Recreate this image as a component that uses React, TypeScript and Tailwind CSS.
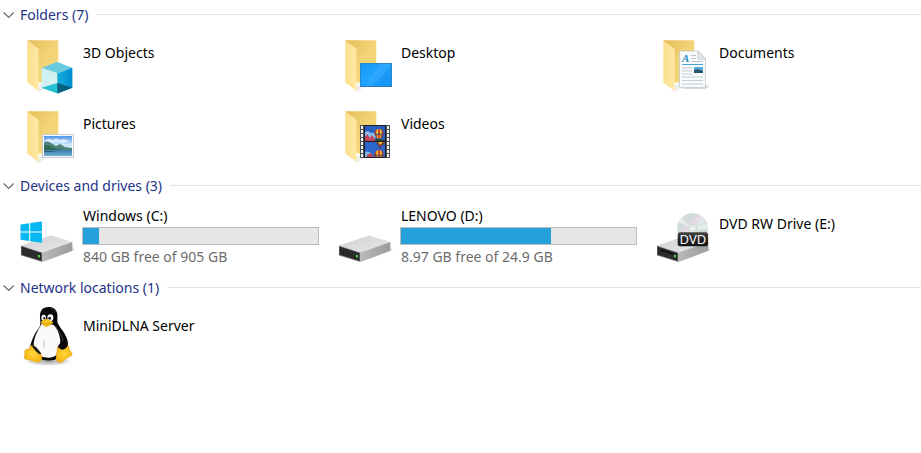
import { useState } from "react";
import type { ReactNode } from "react";

type Item = {
  name: string;
  icon: ReactNode;
  detail?: string;
  used?: number;
};

type Group = {
  title: string;
  items: Item[];
};

function Icon({ children }: { children: ReactNode }) {
  return (
    <svg viewBox="0 0 62 71" className="h-[71px] w-[62px] shrink-0" aria-hidden="true">
      {children}
    </svg>
  );
}

function FolderIcon({ children }: { children: ReactNode }) {
  return (
    <Icon>
      <defs>
        <linearGradient id="folder-back" x1="0" y1="0" x2="1" y2="1">
          <stop offset="0" stopColor="#e6bd58" />
          <stop offset="0.5" stopColor="#f2d377" />
          <stop offset="1" stopColor="#f7da7c" />
        </linearGradient>
        <linearGradient id="folder-flap" x1="0" y1="0" x2="1" y2="0">
          <stop offset="0" stopColor="#fbdf8e" />
          <stop offset="1" stopColor="#ffe9a6" />
        </linearGradient>
      </defs>
      <path d="M15 60 L19 63 L26 58 L22 54 Z" fill="#eeeeee" />
      <path d="M7.5 11.3 H38.3 V53.5 H18 Z" fill="url(#folder-back)" />
      <path d="M7.3 11.3 L18.5 20 V62 L7.3 53.5 Z" fill="url(#folder-flap)" />
      {children}
    </Icon>
  );
}

function ObjectsIcon() {
  return (
    <FolderIcon>
      <defs>
        <linearGradient id="cube-right" x1="0" y1="0" x2="1" y2="0">
          <stop offset="0" stopColor="#12b0dc" />
          <stop offset="1" stopColor="#0289d2" />
        </linearGradient>
        <linearGradient id="cube-left" x1="0" y1="0" x2="1" y2="1">
          <stop offset="0" stopColor="#c9f1f5" />
          <stop offset="1" stopColor="#d9f0f1" />
        </linearGradient>
      </defs>
      <path d="M37.3 33 L52.4 38.7 L37.3 44.3 L21.6 38.7 Z" fill="#68cbdf" />
      <path d="M21.6 38.7 L37.3 44.3 V64.5 L21.6 58.8 Z" fill="url(#cube-left)" />
      <path d="M52.4 38.7 L37.3 44.3 V64.5 L52.4 58.8 Z" fill="url(#cube-right)" />
      <path d="M21.6 58.8 L37.3 54 V64.5 Z" fill="#23bfd3" />
      <path d="M52.4 58.8 L37.3 54 V64.5 Z" fill="#065f7c" />
    </FolderIcon>
  );
}

function DesktopIcon() {
  return (
    <FolderIcon>
      <defs>
        <linearGradient id="screen" x1="0" y1="0" x2="1" y2="1">
          <stop offset="0" stopColor="#1496f5" />
          <stop offset="0.5" stopColor="#22a4ff" />
          <stop offset="0.51" stopColor="#1a9cfb" />
          <stop offset="1" stopColor="#1494f4" />
        </linearGradient>
      </defs>
      <rect x="22" y="34" width="32" height="24" fill="#2b86cc" />
      <rect x="23" y="35" width="30" height="22" fill="url(#screen)" />
      <path d="M27 57 L42 35 H53 V37 L35 57 Z" fill="#3fb0ff" opacity="0.45" />
      <rect x="22" y="57" width="32" height="1" fill="#2b7db8" />
    </FolderIcon>
  );
}

function DocumentsIcon() {
  return (
    <FolderIcon>
      <path d="M48 56 L54 57 L49 60 H24 Z" fill="#d9d9d9" />
      <path d="M23.5 22 H42 L49.5 30 V58.5 H23.5 Z" fill="#f8fafc" stroke="#c3c8cc" strokeWidth="0.8" />
      <path d="M42 22 V30 H49.5 Z" fill="#e6e9ec" stroke="#bcc1c5" strokeWidth="0.8" />
      <text x="26" y="33" fontSize="11" fontStyle="italic" fontWeight="bold" fill="#2a8cc4" fontFamily="Liberation Serif, serif">
        A
      </text>
      <path d="M35 26.5 H40 M35 29.5 H40 M35 32.5 H47" stroke="#b9c0c6" strokeWidth="0.9" />
      <path d="M26 35.5 H47" stroke="#4ba3cf" strokeWidth="1" />
      <path d="M26 39 H36 M26 42 H36 M26 45 H36 M26 48 H47 M26 51.5 H47 M26 55 H47" stroke="#c1c6cb" strokeWidth="0.9" />
      <rect x="38" y="38" width="9" height="6" fill="#57aee2" />
      <path d="M38 41 Q42 39 47 42 V44 H38 Z" fill="#24566d" />
    </FolderIcon>
  );
}

function PicturesIcon() {
  return (
    <FolderIcon>
      <defs>
        <linearGradient id="sky" x1="0" y1="0" x2="0" y2="1">
          <stop offset="0" stopColor="#4f96ea" />
          <stop offset="0.6" stopColor="#c9e6fb" />
          <stop offset="1" stopColor="#e3f3fb" />
        </linearGradient>
        <linearGradient id="lake" x1="0" y1="0" x2="0" y2="1">
          <stop offset="0" stopColor="#3d7cae" />
          <stop offset="1" stopColor="#71afd2" />
        </linearGradient>
      </defs>
      <path d="M48 57 L56 58 H30 Z" fill="#cccccc" />
      <rect x="22.5" y="34.5" width="31" height="23" fill="#f7f9fa" stroke="#c5ccd4" />
      <rect x="24" y="36" width="28" height="14" fill="url(#sky)" />
      <path d="M25 41 Q28 37 32 40 Q36 37 40 40 Q45 38 49 41 Q44 44 38 42 Q31 44 25 41 Z" fill="#ffffff" opacity="0.65" />
      <path d="M24 43 Q27 40 31 43 L36 46 L40 44 L45 47 L52 48 V51 H24 Z" fill="#4d8479" />
      <path d="M24 46 Q29 44 34 48 L43 50 H24 Z" fill="#326a55" />
      <rect x="24" y="50" width="28" height="6" fill="url(#lake)" />
      <path d="M24 51 H38 L31 52 H24 Z" fill="#285f79" />
    </FolderIcon>
  );
}

function Balloon({ x, y }: { x: number; y: number }) {
  return (
    <g transform={`translate(${x} ${y})`}>
      <path d="M0 4.5 A4.5 4.5 0 0 1 9 4.5 Q9 7 6 9.5 H3 Q0 7 0 4.5 Z" fill="#c8382a" />
      <path d="M2.2 0.8 Q0.8 5 3.4 9.4 L4 9.4 Q2.8 5 3.8 0 Z" fill="#f2c62f" />
      <path d="M6.8 0.8 Q8.2 5 5.6 9.4 L5 9.4 Q6.2 5 5.2 0 Z" fill="#f2c62f" />
      <path d="M0.2 4 H8.8 L8.2 6.3 H0.8 Z" fill="#3d3049" opacity="0.8" />
      <path d="M1.3 5.2 L2.6 4.2 L3.8 5.2 L5 4.2 L6.2 5.2 L7.6 4.2" fill="none" stroke="#f3cc43" strokeWidth="0.8" />
      <rect x="3.5" y="10.3" width="2" height="1.5" fill="#4a2d22" />
    </g>
  );
}

function VideosIcon() {
  const holes = [26, 30, 34, 38, 42, 46, 50, 54];
  return (
    <FolderIcon>
      <defs>
        <clipPath id="frame-top">
          <rect x="27" y="26" width="20" height="15" />
        </clipPath>
        <clipPath id="frame-bottom">
          <rect x="27" y="42" width="20" height="15" />
        </clipPath>
      </defs>
      <rect x="22" y="25" width="30" height="33" fill="#4b4e51" />
      <rect x="26" y="25" width="22" height="33" fill="#1d1f22" />
      {holes.map((y) => (
        <g key={y} fill="#f4f4f4">
          <rect x="23" y={y} width="2" height="3" />
          <rect x="49" y={y} width="2" height="3" />
        </g>
      ))}
      <g clipPath="url(#frame-top)">
        <rect x="27" y="26" width="20" height="15" fill="#285fc1" />
        <path d="M27 32 Q30 30 33 33 Q36 31 38 36 L36 41 H27 Z" fill="#88bce8" />
        <path d="M27 37 L29 34 L32 38 L34 35 L38 41 H27 Z" fill="#c54258" />
        <Balloon x={36.5} y={29} />
        <path d="M36 41 L39 39 L47 40 V41 Z" fill="#264a2b" />
      </g>
      <g clipPath="url(#frame-bottom)">
        <rect x="27" y="42" width="20" height="15" fill="#2c66ca" />
        <path d="M38 42 H47 Q46 45 43 46 V48 H41 V46 Q39 44 38 42 Z" fill="#7b3831" />
        <path d="M40 42 L42 45 L45 42 Z" fill="#e9bb3c" />
        <path d="M27 52 Q31 50 35 55 V58 H27 Z" fill="#82b5e2" />
        <path d="M29 55 L33 53 L36 57 H29 Z" fill="#ba4255" />
        <Balloon x={36.5} y={50} />
      </g>
    </FolderIcon>
  );
}

function DriveBody() {
  return (
    <>
      <defs>
        <linearGradient id="drive-top" x1="0" y1="0" x2="1" y2="1">
          <stop offset="0" stopColor="#cfd0d3" />
          <stop offset="1" stopColor="#e9e9eb" />
        </linearGradient>
        <linearGradient id="drive-side" x1="0" y1="0" x2="1" y2="0">
          <stop offset="0" stopColor="#b9babc" />
          <stop offset="1" stopColor="#999b9d" />
        </linearGradient>
      </defs>
      <path d="M24 62 L55 50 L52 47 Z" fill="#e3e3e3" />
      <path d="M1 45.5 L31 35.5 L52.3 42 L22.3 52.5 Z" fill="url(#drive-top)" />
      <path d="M22.3 52.5 L52.3 42 V50.8 L22.3 62 Z" fill="url(#drive-side)" />
      <path d="M1 45.5 L22.3 52.5 V62 L1 55.5 Z" fill="#88898b" />
      <path d="M1.4 46.6 L21.6 53 V61 L1.4 54.8 Z" fill="#292b2d" />
      <rect x="18" y="55" width="2" height="2.4" fill="#46d34a" />
    </>
  );
}

function WindowsDriveIcon() {
  return (
    <Icon>
      <DriveBody />
      <path d="M0.5 24.6 L9.2 23.3 V31.6 H0.5 Z M10.2 23.1 L22 21.5 V31.6 H10.2 Z M0.5 32.6 H9.2 V41 L0.5 39.8 Z M10.2 32.6 H22 V42.8 L10.2 41.2 Z" fill="#08b8f1" />
    </Icon>
  );
}

function DvdDriveIcon() {
  return (
    <Icon>
      <defs>
        <linearGradient id="disc" x1="0" y1="0" x2="1" y2="1">
          <stop offset="0" stopColor="#dde3e1" />
          <stop offset="0.3" stopColor="#cfdad5" />
          <stop offset="0.42" stopColor="#ead9e8" />
          <stop offset="0.55" stopColor="#dfe8e4" />
          <stop offset="0.75" stopColor="#c4d8cf" />
          <stop offset="1" stopColor="#d9dddc" />
        </linearGradient>
        <linearGradient id="badge" x1="0" y1="0" x2="0" y2="1">
          <stop offset="0" stopColor="#474747" />
          <stop offset="0.5" stopColor="#222222" />
          <stop offset="1" stopColor="#161616" />
        </linearGradient>
      </defs>
      <DriveBody />
      <path d="M5 50 L17 54" stroke="#090909" strokeWidth="1.5" />
      <circle cx="36.5" cy="28.5" r="15.2" fill="url(#disc)" stroke="#d2d8d5" strokeWidth="0.5" />
      <path d="M36.5 28.5 L22 22 A15 15 0 0 1 25 18 Z M36.5 28.5 L51 24 A15 15 0 0 1 51.5 30 Z" fill="#ffffff" opacity="0.45" />
      <circle cx="36.5" cy="28.5" r="4.3" fill="#e9edeb" stroke="#b7c4be" strokeWidth="0.6" />
      <circle cx="36.5" cy="28.5" r="1.7" fill="#ffffff" stroke="#b9c1bd" strokeWidth="0.5" />
      <rect x="21.7" y="32.2" width="30.4" height="14" rx="2.5" fill="url(#badge)" />
      <text x="36.9" y="43.6" textAnchor="middle" fontSize="13" fill="#f8f8f8" fontFamily="Noto Sans, sans-serif">
        DVD
      </text>
    </Icon>
  );
}

function PenguinIcon() {
  return (
    <svg viewBox="60 81 186 213" className="h-[71px] w-[62px] shrink-0" aria-hidden="true">
      <defs>
        <radialGradient id="foot">
          <stop offset="0" stopColor="#ffd63a" />
          <stop offset="1" stopColor="#f3b515" />
        </radialGradient>
        <radialGradient id="ground">
          <stop offset="0" stopColor="#777777" stopOpacity="0.7" />
          <stop offset="0.7" stopColor="#aaaaaa" stopOpacity="0.35" />
          <stop offset="1" stopColor="#ffffff" stopOpacity="0" />
        </radialGradient>
      </defs>
      <ellipse cx="145" cy="259" rx="78" ry="15" fill="url(#ground)" />
      <path d="M146 96 C127 96 119 108 120 127 C121 144 123 150 116 160 C104 175 97 191 92 208 C87 222 92 233 105 243 C125 262 171 262 191 236 C206 226 207 204 199 187 C193 171 181 160 175 148 C169 137 175 127 171 113 C167 101 159 96 146 96 Z" fill="#080808" />
      <path d="M124 147 C119 158 107 177 103 194 C98 210 104 222 116 232 C119 239 122 246 133 247 C150 251 167 245 171 237 C174 221 184 212 180 190 C177 172 170 158 160 149 Z" fill="#fafafa" />
      <path d="M166 153 C177 169 190 185 189 205" fill="none" stroke="#55585b" strokeWidth="2" />
      <path d="M151 99 Q164 99 166 110" fill="none" stroke="#5a5b5c" strokeWidth="2" />
      <path d="M133 196 Q129 207 133 218" fill="none" stroke="#a8a8a8" strokeWidth="2" />
      <ellipse cx="131" cy="128" rx="7" ry="9" fill="#f6f6f6" />
      <ellipse cx="151" cy="128" rx="9" ry="10" fill="#f6f6f6" />
      <ellipse cx="133" cy="130" rx="3" ry="4" fill="#111111" />
      <ellipse cx="149" cy="130" rx="4" ry="4" fill="#111111" />
      <path d="M124 139 C129 136 134 131 140 132 C147 133 151 138 159 140 C160 146 153 149 148 152 C141 158 134 157 129 150 C125 147 122 144 124 139 Z" fill="#f9c21d" />
      <path d="M126 144 Q137 153 157 143" fill="none" stroke="#b77b12" strokeWidth="2" />
      <path d="M94 211 C101 209 107 215 112 223 C118 231 127 238 126 248 C126 256 119 263 110 262 C99 260 89 254 76 253 C69 249 75 241 74 234 C72 227 76 222 85 222 C90 220 88 214 94 211 Z" fill="url(#foot)" stroke="#c98d12" strokeWidth="1" />
      <path d="M172 217 C176 212 178 220 183 223 C190 226 199 219 203 211 C208 213 206 222 211 228 C217 232 219 239 212 244 C202 248 194 256 187 261 C179 265 170 261 168 253 C167 241 172 229 172 217 Z" fill="url(#foot)" stroke="#c98d12" strokeWidth="1" />
      <path d="M173 217 C176 206 190 194 201 199 C207 207 201 222 189 223 C181 224 179 219 173 217 Z" fill="#080808" />
      <path d="M94 211 C104 209 113 222 124 236 L119 238 C109 232 102 222 94 211 Z" fill="#151515" />
    </svg>
  );
}

const groups: Group[] = [
  {
    title: "Folders (7)",
    items: [
      { name: "3D Objects", icon: <ObjectsIcon /> },
      { name: "Desktop", icon: <DesktopIcon /> },
      { name: "Documents", icon: <DocumentsIcon /> },
      { name: "Pictures", icon: <PicturesIcon /> },
      { name: "Videos", icon: <VideosIcon /> },
    ],
  },
  {
    title: "Devices and drives (3)",
    items: [
      { name: "Windows (C:)", icon: <WindowsDriveIcon />, detail: "840 GB free of 905 GB", used: 7 },
      { name: "LENOVO (D:)", icon: <Icon><DriveBody /></Icon>, detail: "8.97 GB free of 24.9 GB", used: 64 },
      { name: "DVD RW Drive (E:)", icon: <DvdDriveIcon /> },
    ],
  },
  {
    title: "Network locations (1)",
    items: [{ name: "MiniDLNA Server", icon: <PenguinIcon /> }],
  },
];

function Tile({ item }: { item: Item }) {
  return (
    <li className="flex pr-[19px]">
      {item.icon}
      {item.detail ? (
        <div className="min-w-0 flex-1 pt-1.5 pb-1.5">
          <p className="truncate pl-px">{item.name}</p>
          <div
            role="progressbar"
            aria-label={`${item.name} used space`}
            aria-valuenow={item.used}
            aria-valuemin={0}
            aria-valuemax={100}
            className="mt-px h-[18px] border border-[#bcbcbc] bg-[#e6e6e6]"
          >
            <div className="h-full bg-[#26a0da]" style={{ width: `${item.used}%` }} />
          </div>
          <p className="mt-0.5 truncate pl-px text-[#6d6d6d]">{item.detail}</p>
        </div>
      ) : (
        <p className="min-w-0 flex-1 truncate pt-3.5 pl-px">{item.name}</p>
      )}
    </li>
  );
}

function GroupSection({ group }: { group: Group }) {
  const [open, setOpen] = useState(true);

  return (
    <section>
      <h2>
        <button
          type="button"
          aria-expanded={open}
          onClick={() => setOpen(!open)}
          className="flex h-[29px] w-full items-center pl-[3px] text-left text-[#1e3287]"
        >
          <svg
            viewBox="0 0 12 12"
            className={open ? "mr-[5px] size-3 shrink-0" : "mr-[5px] size-3 shrink-0 -rotate-90"}
            aria-hidden="true"
          >
            <path d="M0.7 3.5 L5.7 8.5 L10.7 3.5" fill="none" stroke="#6b6b6b" strokeWidth="1.2" />
          </svg>
          <span className="whitespace-nowrap">{group.title}</span>
          <span className="ml-2 h-px flex-1 bg-[#e2e2e2]" />
        </button>
      </h2>
      {open && (
        <ul className="grid grid-cols-[6fr_6fr_5fr] pl-5">
          {group.items.map((item) => (
            <Tile key={item.name} item={item} />
          ))}
        </ul>
      )}
    </section>
  );
}

export default function App() {
  return (
    <main className="min-h-screen bg-white font-['Noto_Sans','Open_Sans',sans-serif] text-[14px] leading-5 text-black">
      {groups.map((group) => (
        <GroupSection key={group.title} group={group} />
      ))}
    </main>
  );
}
